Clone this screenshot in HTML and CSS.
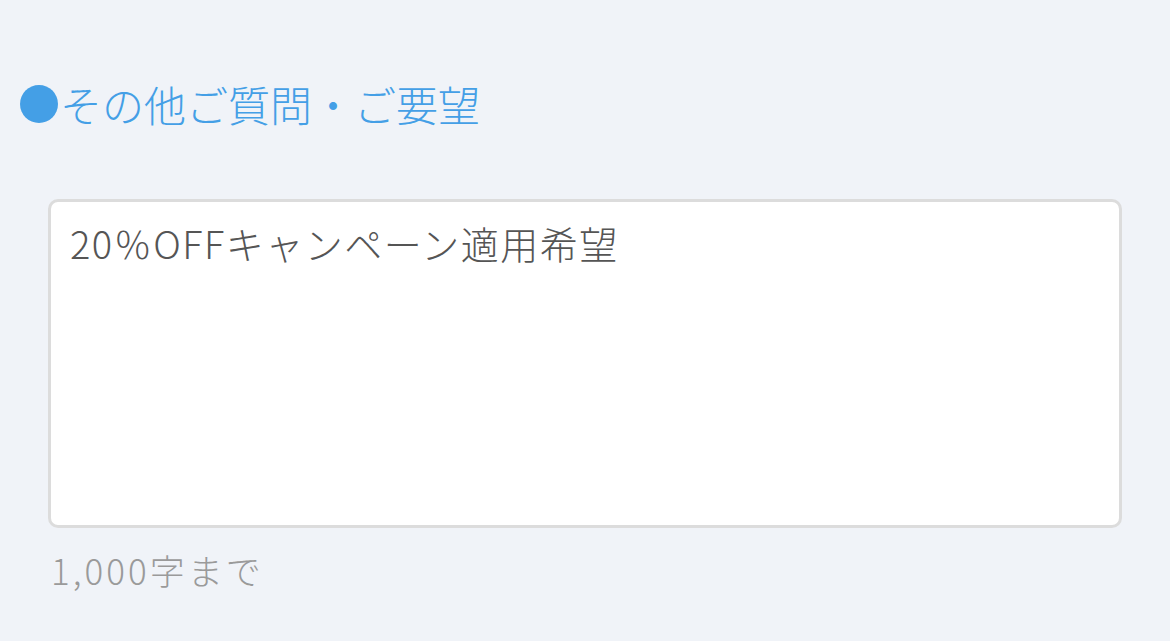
FILE: index.html
```html
<!DOCTYPE html>
<html lang="ja">
<head>
    <meta charset="UTF-8">
    <meta name="viewport" content="width=device-width, initial-scale=1.0">
    <title>その他ご質問・ご要望</title>
    <link rel="stylesheet" href="styles.css">
</head>
<body>
    <section class="form-item">
        <h2 class="item-title"><span class="dot"></span>その他ご質問・ご要望</h2>
        <div class="field">
            <textarea class="request-input" maxlength="1000">20％OFFキャンペーン適用希望</textarea>
            <p class="note">1,000字まで</p>
        </div>
    </section>
</body>
</html>
```

FILE: styles.css
```css
:root {
    --bg-color: #f0f3f8;
    --accent-color: #449fe6;
    --text-color: #555555;
    --muted-color: #9a9a9a;
    --border-color: #dcdcdc;
}

* {
    margin: 0;
    padding: 0;
    box-sizing: border-box;
}

body {
    font-family: "Noto Sans CJK JP", sans-serif;
    font-weight: 300;
    background-color: var(--bg-color);
    color: var(--text-color);
    min-height: 100vh;
}

.form-item {
    padding: 76px 0 0 20px;
}

.item-title {
    display: flex;
    align-items: center;
    font-size: 42px;
    font-weight: 300;
    line-height: 56px;
    color: var(--accent-color);
}

.dot {
    width: 38px;
    height: 38px;
    border-radius: 50%;
    background: var(--accent-color);
    margin-right: 2px;
}

.field {
    padding: 67px 48px 0 28px;
}

.request-input {
    display: block;
    width: 100%;
    height: 329px;
    padding: 15px 19px;
    border: 3px solid var(--border-color);
    border-radius: 10px;
    background: white;
    font-family: inherit;
    font-weight: 300;
    font-size: 38px;
    letter-spacing: 1.5px;
    line-height: 52px;
    color: var(--text-color);
    resize: none;
    outline: none;
}

.note {
    margin-top: 18px;
    padding-left: 3px;
    font-size: 35px;
    letter-spacing: 3px;
    line-height: 48px;
    color: var(--muted-color);
}
```
